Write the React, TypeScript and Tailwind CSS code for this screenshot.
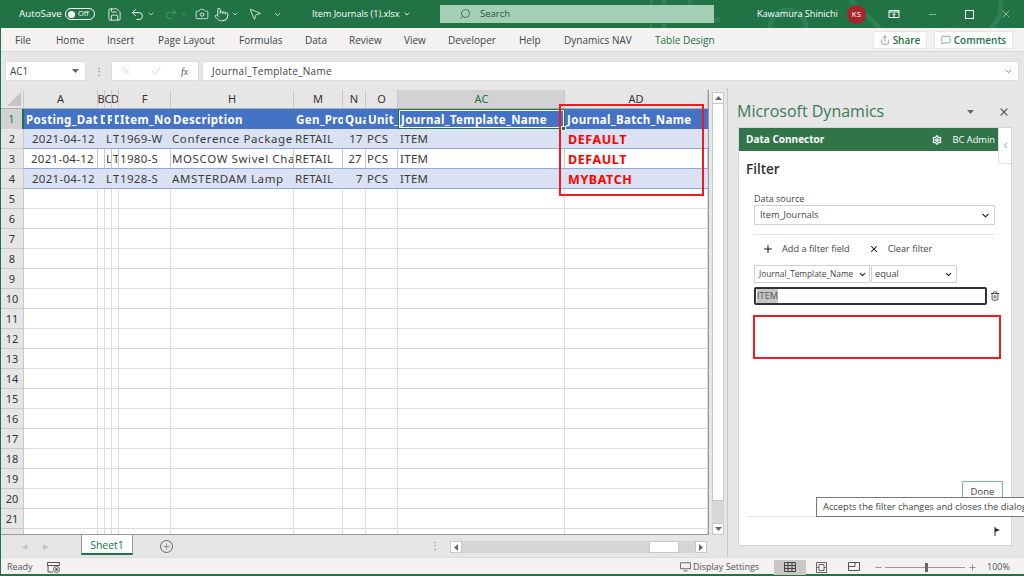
import React from "react";
import { Save, Undo2, Redo2, Camera, Pointer, MousePointer2, ChevronDown, Search, MessageSquare, Share, Check, X, Settings, Trash2, Plus, ChevronLeft, Minus } from "lucide-react";

const cols: [string, number][] = [["A",74],["B",7],["C",7],["D",7],["F",52],["H",123],["M",49],["N",23],["O",32],["AC",167],["AD",143]];
const head = ["Posting_Dat","D","P","D","Item_No","Description","Gen_Pro","Qua","Unit_","Journal_Template_Name","Journal_Batch_Name"];
const rowsData = [
  ["2021-04-12","","L","T","1969-W","Conference Package 1","RETAIL","17","PCS","ITEM","DEFAULT"],
  ["2021-04-12","","L","T","1980-S","MOSCOW Swivel Chair","RETAIL","27","PCS","ITEM","DEFAULT"],
  ["2021-04-12","","L","T","1928-S","AMSTERDAM Lamp","RETAIL","7","PCS","ITEM","MYBATCH"],
];

function Cell({ c, i, kind }: { c: string; i: number; kind: number }) {
  const w = cols[i][1];
  const align = i === 0 || i === 7 ? "justify-end pr-[3px]" : i === 10 ? "justify-start pl-[3px] pt-[3px]" : i === 9 ? "justify-start pl-[2px]" : "justify-start pl-[1px]";
  const red = i === 10;
  const track = i === 5 ? "tracking-[0.6px]" : "tracking-[0.3px]";
  return (
    <div style={{ width: w }} className={`h-full shrink-0 flex items-center overflow-hidden whitespace-nowrap ${kind === 1 ? "" : "border-r border-[#c8c8c8]"} ${align}`}>
      <span className={red ? "text-[#ff0000] font-bold text-[12.5px] tracking-[0.6px]" : `text-[#3c3c3c] ${track}`}>{c}</span>
    </div>
  );
}

function Arrow({ d, cls }: { d: string; cls: string }) {
  return <svg width="7" height="5" viewBox="0 0 7 5" className={cls}><path d={d} fill="currentColor" /></svg>;
}

export default function App() {
  return (
    <div className="w-[1024px] h-[576px] overflow-hidden bg-[#e6e6e6] flex flex-col border-l border-[#217346] text-[#444]" style={{ fontFamily: '"Open Sans","Noto Sans",sans-serif' }}>
      {/* title bar */}
      <div className="h-[28px] shrink-0 bg-[#217346] -ml-px flex items-center text-white text-[9.8px] relative overflow-hidden">
        <svg className="absolute left-[650px] top-0" width="374" height="28" viewBox="0 0 374 28" fill="none" stroke="#2c8054" strokeWidth="5">
          <path d="M0 0v28M14 0v28M40 0v20h30M120 28a18 18 0 0 1 36 0M200 0l30 28M300 28a30 30 0 0 0 50-28" />
        </svg>
        <span className="ml-[19px] w-[46px] relative">AutoSave</span>
        <div className="w-[30px] h-[12px] rounded-full border border-white flex items-center relative">
          <span className="ml-[2px] w-[7px] h-[7px] rounded-full bg-white" />
          <span className="ml-[3px] text-[7.5px] leading-none">Off</span>
        </div>
        <Save size={15} strokeWidth={1.3} className="ml-[12px] relative" />
        <Undo2 size={15} strokeWidth={1.4} className="ml-[8px] relative" />
        <ChevronDown size={8} className="ml-[2px] relative" />
        <Redo2 size={14} strokeWidth={1.4} className="ml-[9px] text-[#5b9a7a] relative" />
        <ChevronDown size={8} className="ml-[2px] text-[#5b9a7a] relative" />
        <Camera size={14} strokeWidth={1.3} className="ml-[7px] relative" />
        <Pointer size={15} strokeWidth={1.3} className="ml-[5px] relative" />
        <ChevronDown size={8} className="ml-[2px] relative" />
        <MousePointer2 size={14} strokeWidth={1.3} className="ml-[9px] relative" />
        <ChevronDown size={9} className="ml-[11px] relative" />
        <span className="ml-[30px] w-[91px] relative whitespace-nowrap text-[9.1px]">Item Journals (1).xlsx</span>
        <ChevronDown size={8} strokeWidth={3} className="relative" />
        <div className="ml-[29px] w-[274px] h-[18px] bg-[#a3cfb4] flex items-center text-[#23593c] relative">
          <Search size={12} strokeWidth={1.5} className="ml-[19px] -scale-x-100" />
          <span className="ml-[9px] text-[9.5px]">Search</span>
        </div>
        <span className="ml-[43px] w-[81px] whitespace-nowrap relative text-[9.1px]">Kawamura Shinichi</span>
        <div className="ml-[9px] w-[19px] h-[19px] rounded-full bg-[#a4262c] flex items-center justify-center text-[8px] relative">KS</div>
        <svg width="12" height="10" viewBox="0 0 12 10" fill="none" stroke="white" className="ml-[22px] relative"><path d="M1 1.500h10v7H1zM1 3h10M6 8V4.500M4.500 6 6 4.500 7.500 6" /></svg>
        <Minus size={11} strokeWidth={1} className="ml-[27px] relative" />
        <div className="ml-[27px] w-[9px] h-[9px] border border-white relative" />
        <X size={12} strokeWidth={1} className="ml-[26px] relative" />
      </div>

      {/* ribbon tabs */}
      <div className="h-[24px] shrink-0 bg-[#f3f2f1] flex items-center pt-[1px] text-[10px] text-[#444] relative border-b border-[#d8d8d8]">
        {[["File",14,"w-[41px]"],["Home",0,"w-[51px]"],["Insert",0,"w-[51px]"],["Page Layout",0,"w-[81px]"],["Formulas",0,"w-[66px]"],["Data",0,"w-[44px]"],["Review",0,"w-[55px]"],["View",0,"w-[44px]"],["Developer",0,"w-[71px]"],["Help",0,"w-[45px]"],["Dynamics NAV",0,"w-[91px]"]].map(([t,ml,w]) => (
          <span key={t as string} className={`${w as string} whitespace-nowrap ${ml ? "ml-[14px]" : ""}`}>{t}</span>
        ))}
        <span className="text-[#217346] whitespace-nowrap">Table Design</span>
        <div className="ml-auto mr-[11px] flex gap-[7px]">
          <div className="w-[54px] h-[18px] bg-white border border-[#e6e6e6] flex items-center justify-center gap-[3px] text-[#217346] font-semibold">
            <Share size={10} strokeWidth={1.3} className="text-[#555]" />Share
          </div>
          <div className="w-[79px] h-[18px] bg-white border border-[#e6e6e6] flex items-center justify-center gap-[3px] text-[#217346] font-semibold">
            <MessageSquare size={10} strokeWidth={1.3} />Comments
          </div>
        </div>
      </div>

      {/* formula bar */}
      <div className="h-[36px] shrink-0 flex items-start pt-[9px] text-[10px]">
        <div className="ml-[4px] w-[81px] h-[20px] bg-white border border-[#dcdcdc] flex items-center justify-between px-[4px]">
          <span>AC1</span><Arrow d="M0 0h7L3.500 4z" cls="text-[#666] mr-[2px]" />
        </div>
        <div className="w-[25px] h-[20px] flex items-center justify-center text-[#999] font-bold">⋮</div>
        <div className="w-[88px] h-[20px] bg-white border border-[#dcdcdc] flex items-center text-[#bbb]">
          <X size={11} strokeWidth={1.2} className="ml-[9px]" />
          <Check size={12} strokeWidth={1.2} className="ml-[18px]" />
          <span className="ml-[19px] text-[#555] italic text-[10px]" style={{ fontFamily: '"Liberation Serif",serif' }}>fx</span>
        </div>
        <div className="ml-[3px] w-[817px] h-[20px] bg-white border border-[#dcdcdc] flex items-center pl-[9px] pr-[5px] justify-between tracking-[0.3px]">
          <span>Journal_Template_Name</span><ChevronDown size={9} strokeWidth={2} className="text-[#666]" />
        </div>
      </div>

      {/* main */}
      <div className="flex-1 min-h-0 flex">
        <div className="w-[726px] shrink-0 flex flex-col relative">
          <div className="h-[447px] shrink-0 pt-[2px] flex">
            <div className="flex-1 min-w-0 flex flex-col bg-white overflow-hidden text-[11.5px] relative border-b border-r border-[#9a9a9a]" style={{ fontFamily: '"Noto Sans",sans-serif' }}>
              <div className="h-[19px] shrink-0 flex bg-[#e6e6e6] border-b border-[#b0b0b0]">
                <div className="w-[23px] shrink-0 border-r border-[#c8c8c8] flex items-end justify-end">
                  <svg width="14" height="14" viewBox="0 0 14 14" className="mr-[2px] mb-[2px]"><path d="M14 0v14H0z" fill="#c4c4c4" /></svg>
                </div>
                {cols.map(([n, w], i) => (
                  <div key={n} style={{ width: w }} className={`shrink-0 flex items-center justify-center overflow-hidden border-r border-[#c8c8c8] text-[11px] ${i === 9 ? "bg-[#d2d2d2] text-[#217346] pl-[1px]" : "text-[#333]"}`}>{n}</div>
                ))}
              </div>
              {/* row 1 */}
              <div className="h-[20px] shrink-0 flex">
                <div className="w-[23px] shrink-0 bg-[#d2d2d2] border-r-2 border-[#217346] flex items-center justify-center pt-px text-[#217346] text-[11px]">1</div>
                <div className="flex bg-[#4472c4] text-white font-bold tracking-[0.35px]">
                  {head.map((c, i) => (
                    <div key={i} style={{ width: cols[i][1] }} className={`shrink-0 overflow-hidden whitespace-nowrap flex items-center pt-px ${i === 9 ? "pl-[1px] border-2 border-[#217346] outline outline-1 outline-white -outline-offset-2" : i === 4 ? "pl-[1px]" : i === 10 ? "pl-[2px]" : "pl-[2px]"}`}>{c}</div>
                  ))}
                </div>
              </div>
              {rowsData.map((r, ri) => (
                <div key={ri} className="h-[20px] shrink-0 flex">
                  <div className="w-[23px] shrink-0 bg-[#e6e6e6] border-r border-b border-[#c8c8c8] flex items-center justify-center pt-px text-[11px] text-[#333]">{ri + 2}</div>
                  <div className={`flex border-b border-[#8ea9db] ${ri % 2 === 0 ? "bg-[#d9e1f2]" : "bg-white"}`}>
                    {r.map((c, i) => <Cell key={i} c={c} i={i} kind={ri % 2 === 0 ? 1 : 0} />)}
                  </div>
                </div>
              ))}
              {Array.from({ length: 18 }).map((_, ri) => (
                <div key={ri} className="h-[20px] shrink-0 flex">
                  <div className="w-[23px] shrink-0 bg-[#e6e6e6] border-r border-b border-[#c8c8c8] flex items-center justify-center pt-px text-[11px] text-[#333]">{ri + 5}</div>
                  {cols.map(([n, w]) => (
                    <div key={n} style={{ width: w }} className="shrink-0 border-r border-b border-[#dcdcdc]" />
                  ))}
                </div>
              ))}
              <div className="absolute left-[560px] top-[36px] w-[5px] h-[5px] bg-[#217346] border border-white" />
              <div className="absolute left-[558px] top-[14px] w-[145px] h-[92px] border-[2px] border-[#ed1c24]" />
            </div>
            <div className="w-[12px] ml-[3px] mr-[3px] flex flex-col bg-[#d8d8d8] mt-[2px] shrink-0">
              <div className="h-[12px] bg-white border border-[#c8c8c8] flex items-center justify-center"><Arrow d="M0 4h7L3.500 0z" cls="text-[#666]" /></div>
              <div className="h-[397px] bg-white border-x border-b border-[#c8c8c8]" />
              <div className="flex-1" />
              <div className="h-[12px] bg-white border border-[#c8c8c8] flex items-center justify-center"><Arrow d="M0 0h7L3.500 4z" cls="text-[#666]" /></div>
            </div>
          </div>
          <div className="flex-1 flex items-start text-[10.5px]">
            <span className="ml-[21px] mt-[7px] text-[#c0c0c0] text-[7px]">◀</span>
            <span className="ml-[16px] mt-[7px] text-[#c0c0c0] text-[7px]">▶</span>
            <div className="ml-[33px] w-[52px] h-[20px] bg-white border-b-2 border-[#217346] border-x border-x-[#999] flex items-center justify-center pt-[4px] text-[#217346]">Sheet1</div>
            <div className="ml-[27px] mt-[5px] w-[13px] h-[13px] rounded-full border border-[#666] flex items-center justify-center"><Plus size={9} strokeWidth={1.6} className="text-[#666]" /></div>
            <span className="ml-[257px] mt-[3px] text-[#aaa] font-bold text-[10px]">⋮</span>
            <div className="ml-[10px] mt-[6px] w-[257px] h-[12px] bg-[#d6d6d6] flex">
              <div className="w-[12px] h-full bg-white border border-[#c8c8c8] flex items-center justify-center text-[#666]"><svg width="4" height="7" viewBox="0 0 4 7"><path d="M4 0v7L0 3.500z" fill="currentColor" /></svg></div>
              <div className="ml-[187px] w-[30px] h-full bg-white border border-[#c8c8c8]" />
              <div className="ml-auto w-[12px] h-full bg-white border border-[#c8c8c8] flex items-center justify-center text-[#666]"><svg width="4" height="7" viewBox="0 0 4 7"><path d="M0 0v7l4-3.500z" fill="currentColor" /></svg></div>
            </div>
          </div>
        </div>

        {/* pane */}
        <div className="w-[297px] shrink-0 border-l border-[#c8c8c8] flex flex-col relative">
          <div className="h-[39px] shrink-0 flex items-end pl-[9px] pr-[14px] pb-[8px] text-[16px] text-[#3c7a5a] leading-none justify-between">
            <span>Microsoft Dynamics</span>
            <div className="flex items-center mb-[1px] text-[#666]">
              <Arrow d="M0 0h7L3.500 4z" cls="mr-[24px]" />
              <X size={12} strokeWidth={2.5} />
            </div>
          </div>
          <div className="ml-[10px] w-[274px] h-[419px] bg-white border border-[#d6d6d6] flex flex-col relative text-[#444]">
            <div className="h-[23px] shrink-0 bg-[#31744a] mr-[13px] flex items-center justify-between pl-[7px] pr-[3px] text-white text-[10px]">
              <span className="font-bold">Data Connector</span>
              <div className="flex items-center gap-[11px] text-[9.3px]"><Settings size={10} strokeWidth={3} /><span>BC Admin</span></div>
            </div>
            <div className="absolute right-0 top-0 w-[13px] h-[36px] bg-white border-l border-b border-[#e0e0e0] flex items-center justify-center"><ChevronLeft size={9} className="text-[#777]" /></div>
            <div className="px-[7px] pt-[8px] text-[13.5px] font-semibold text-[#333] leading-[20px]">Filter</div>
            <div className="pl-[15px] flex flex-col text-[9.2px]">
              <div className="mt-[14px] leading-[12px] text-[9px]">Data source</div>
              <div className="w-[241px] h-[20px] border border-[#d0d0d0] flex items-center justify-between pl-[5px] pr-[3px]">
                <span>Item_Journals</span><ChevronDown size={11} strokeWidth={2.5} className="text-[#222]" />
              </div>
              <div className="w-[241px] mt-[9px] border-t border-[#e6e6e6]" />
              <div className="mt-[5px] h-[18px] flex items-center pl-[8px]">
                <Plus size={12} strokeWidth={2} className="text-[#111]" />
                <span className="ml-[8px]">Add a filter field</span>
                <X size={10} strokeWidth={2.5} className="ml-[19px] text-[#111]" />
                <span className="ml-[9px]">Clear filter</span>
              </div>
              <div className="mt-[7px] flex gap-px">
                <div className="w-[116px] h-[18px] border border-[#d0d0d0] flex items-center justify-between pl-[4px] pr-[2px] text-[8.3px] whitespace-nowrap"><span>Journal_Template_Name</span><ChevronDown size={9} strokeWidth={3} className="shrink-0 text-[#222]" /></div>
                <div className="w-[86px] h-[18px] border border-[#d0d0d0] flex items-center justify-between pl-[3px] pr-[3px]"><span>equal</span><ChevronDown size={9} strokeWidth={3} className="text-[#222]" /></div>
              </div>
              <div className="mt-[4px] flex items-center">
                <div className="w-[233px] h-[18px] rounded-[2px] border-2 border-[#333] flex items-center pl-[1px]"><span className="bg-[#c6c6c6] text-[#555]">ITEM</span></div>
                <Trash2 size={10} strokeWidth={1.8} className="ml-[3px] text-[#222]" />
              </div>
              <div className="mt-[10px] -ml-px w-[248px] h-[44px] border-[2px] border-[#ed1c24]" />
            </div>
            <div className="flex-1" />
            <div className="mr-[8px] self-end w-[41px] h-[22px] border border-[#7cb48f] rounded-[1px] flex items-center justify-center pt-px text-[9.5px]">Done</div>
            <div className="mt-[13px] mx-[8px] border-t border-[#e6e6e6]" />
            <div className="h-[28px] shrink-0 flex items-center justify-end pr-[10px]">
              <svg width="7" height="9" viewBox="0 0 7 9"><path d="M1 0v9" stroke="#222" /><path d="M1 1l5 2-5 2z" fill="#222" /></svg>
            </div>
          </div>
          <div className="absolute left-[88px] top-[409px] w-[220px] h-[20px] bg-white border border-[#767676] flex items-center pl-[6px] text-[9.3px] whitespace-nowrap">Accepts the filter changes and closes the dialog</div>
        </div>
      </div>

      {/* status bar */}
      <div className="h-[19px] shrink-0 bg-[#f3f2f1] border-t border-[#dcdcdc] border-b-2 border-b-[#217346] flex items-center pt-[2px] text-[9px] text-[#555]">
        <span className="ml-[6px] w-[28px]">Ready</span>
        <svg width="13" height="11" viewBox="0 0 13 11" fill="none" stroke="#555" className="ml-[12px]"><path d="M.5.500h12v3H.5zM1 3.500V10h5" /><circle cx="9.500" cy="7.500" r="3" /><circle cx="9.500" cy="7.500" r="1" fill="#555" /></svg>
        <svg width="11" height="10" viewBox="0 0 13 11" fill="none" stroke="#555" className="ml-[620px]"><path d="M.5.500h12v7H.5zM4 10h5" /></svg>
        <span className="ml-[2px] w-[81px] whitespace-nowrap">Display Settings</span>
        <div className="w-[32px] h-[15px] bg-[#c8c8c8] flex items-center justify-center">
          <svg width="12" height="10" viewBox="0 0 12 10" fill="none" stroke="#444"><path d="M.5.500h11v9H.5zM.5 3.500h11M.5 6.500h11M4 .500v9M8 .500v9" /></svg>
        </div>
        <svg width="11" height="11" viewBox="0 0 11 11" fill="none" stroke="#666" className="ml-[10px]"><path d="M.5.500h10v10H.5zM3 2.500h5v6H3zM1 5.500h2M8 5.500h2" /></svg>
        <svg width="12" height="11" viewBox="0 0 12 11" fill="none" stroke="#555" className="ml-[21px]"><path d="M.5.500h11v8H.5zM7 .500v4H.5" /></svg>
        <Minus size={9} strokeWidth={1.5} className="ml-[14px]" />
        <div className="ml-[2px] w-[80px] h-px bg-[#999] relative">
          <div className="absolute left-[40px] -top-[4px] w-[3px] h-[9px] bg-[#666]" />
        </div>
        <Plus size={9} strokeWidth={1.5} className="ml-[3px]" />
        <span className="ml-[10px]">100%</span>
      </div>
    </div>
  );
}
